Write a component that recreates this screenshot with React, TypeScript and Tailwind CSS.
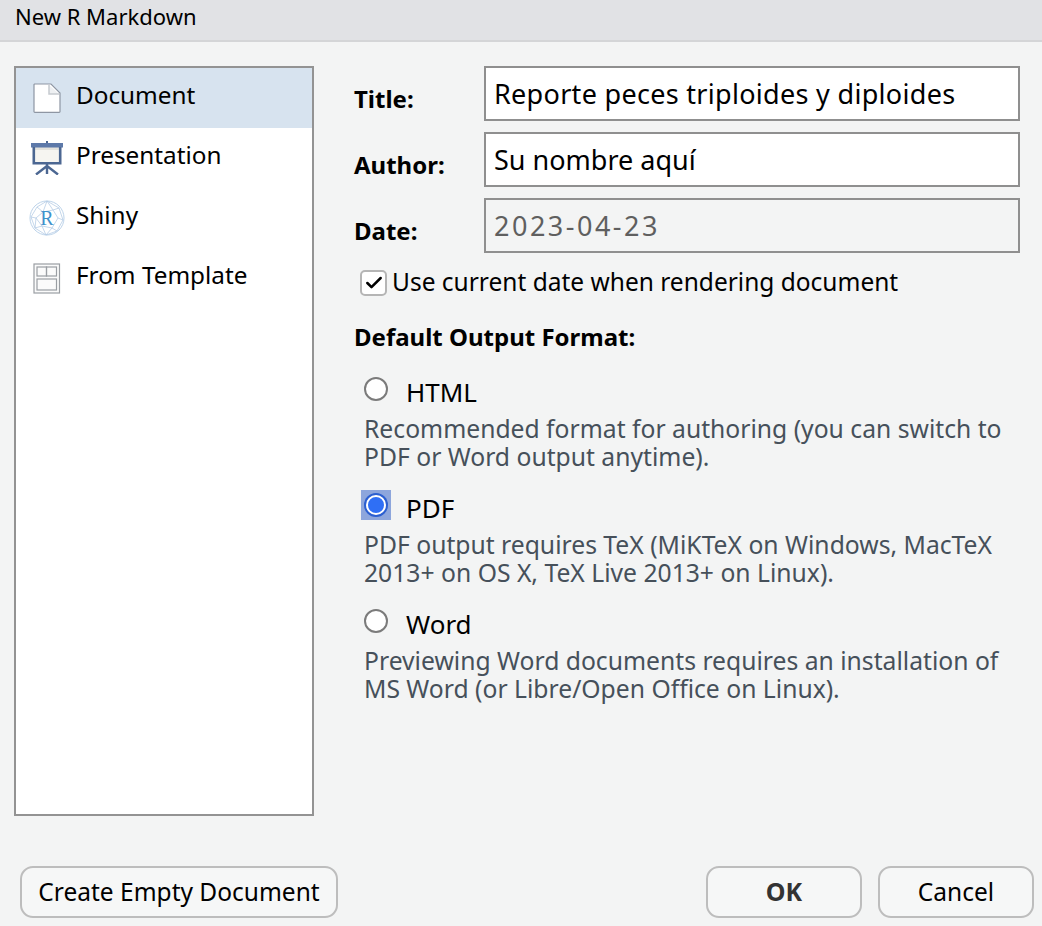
import { Check } from 'lucide-react';

const items = ['Document', 'Presentation', 'Shiny', 'From Template'];

function DocumentIcon() {
  return (
    <svg width="28" height="30" viewBox="0 0 28 30" fill="none">
      <path d="M1.5 1H18L27 10V28.5a.8.8 0 0 1-.8.8H1.8a.8.8 0 0 1-.8-.8V1.5z" fill="#fff" stroke="#8e96a3" strokeWidth="1.2" />
      <path d="M16 2V11H26" fill="#eef0f2" stroke="#c6cad0" strokeWidth="1.5" />
    </svg>
  );
}

function PresentationIcon() {
  return (
    <svg width="34" height="34" viewBox="0 0 34 34" fill="none">
      <rect x="16" y="0" width="2" height="3" fill="#4c6792" />
      <rect x="5" y="6" width="24" height="17" fill="#f6f5f1" />
      <rect x="5" y="6" width="24" height="3" fill="#e3e2dc" />
      <rect x="1" y="2" width="32" height="4.5" fill="#5d79a9" />
      <path d="M3.8 6V22.3H30.2V6" stroke="#4c6792" strokeWidth="2.6" />
      <path d="M17 23V33M17 25L6 33.5M17 25L28 33.5" stroke="#4c6792" strokeWidth="2.4" />
    </svg>
  );
}

function ShinyIcon() {
  return (
    <svg width="36" height="36" viewBox="0 0 36 36" fill="none">
      <circle cx="18" cy="18" r="17" fill="#fff" stroke="#bcd3ea" strokeWidth="1" />
      <path
        d="M18 1L8 7L2 17L6 28L17 35L28 31L34 20L30 8ZM8 7L14 12L18 1L24 10L30 8M14 12L24 10L29 18L34 20M14 12L7 18L2 17M7 18L6 28L13 26L7 18M13 26L17 35L23 28L28 31M23 28L29 18M13 26L23 28"
        stroke="#b6cde6"
        strokeWidth="0.8"
      />
      <text x="18" y="25" textAnchor="middle" fontFamily="'Liberation Serif', serif" fontSize="20" fill="#3f92cc">
        R
      </text>
    </svg>
  );
}

function TemplateIcon() {
  return (
    <svg width="28" height="31" viewBox="0 0 28 31" fill="none" stroke="#9a9ea3" strokeWidth="1.2">
      <rect x="1" y="1" width="25.5" height="29" fill="#fbfbfb" />
      <rect x="4" y="4" width="9.5" height="9" />
      <rect x="13.5" y="4" width="10" height="9" />
      <rect x="4" y="16" width="19.5" height="11" />
    </svg>
  );
}

const icons = [<DocumentIcon />, <PresentationIcon />, <ShinyIcon />, <TemplateIcon />];

function Field({ label, value, disabled, spacing }: { label: string; value: string; disabled?: boolean; spacing?: string }) {
  return (
    <div className="flex h-[55px] items-center">
      <span className="w-[130px] pt-[10px] text-[24px] font-bold text-black">{label}</span>
      <div
        className={`flex h-full w-[536px] items-center border-2 border-[#8f8f8f] pl-[8px] pt-[2px] text-[27px] ${spacing ?? ''} ${
          disabled ? 'bg-[#f3f4f4] text-[#5f5f5f]' : 'bg-white text-black'
        }`}
      >
        {value}
      </div>
    </div>
  );
}

function Format({ label, lines, checked }: { label: string; lines: string[]; checked?: boolean }) {
  return (
    <div className="h-[116px]">
      <div className="flex h-[34px] items-center">
        <div className="relative mb-[10px] ml-[10px] flex h-[24px] w-[24px] items-center justify-center">
          {checked ? (
            <>
              <div className="absolute -inset-[3px] bg-[#8da6dc]" />
              <div className="relative h-[20px] w-[20px] rounded-full border-2 border-white bg-[#2f6ff5] ring-2 ring-[#2b5fd0]" />
            </>
          ) : (
            <div className="h-[24px] w-[24px] rounded-full border-2 border-[#7b7b7b] bg-white" />
          )}
        </div>
        <span className="ml-[18px] pb-[4px] text-[26px] text-black">{label}</span>
      </div>
      <div className="mt-[4px] ml-[10px] text-[24.7px] leading-[28px] text-[#46505a]">
        {lines.map((line) => (
          <div key={line}>{line}</div>
        ))}
      </div>
    </div>
  );
}

export default function App() {
  return (
    <div className="flex h-[926px] flex-col overflow-hidden bg-[#f3f4f4] font-['Noto_Sans',sans-serif]">
      {/* タイトルバー */}
      <div className="flex h-[42px] items-center border-b-2 border-[#d4d5d7] bg-[#e1e2e5] pl-[15px] pb-[7px] text-[22px] text-black">
        New R Markdown
      </div>

      <div className="flex flex-1 pt-[24px] pl-[14px]">
        {/* 左リスト */}
        <div className="h-[750px] w-[300px] border-2 border-[#939393] bg-white">
          {items.map((item, i) => (
            <div key={item} className={`flex h-[60px] items-center ${i === 0 ? 'bg-[#d7e3ef]' : ''}`}>
              <div className="flex w-[60px] justify-center pl-[2px]">{icons[i]}</div>
              <span className="pb-[6px] text-[24.3px] text-black">{item}</span>
            </div>
          ))}
        </div>

        {/* フォーム */}
        <div className="ml-[40px] w-[666px]">
          <div className="flex flex-col gap-[11px]">
            <Field label="Title:" value="Reporte peces triploides y diploides" spacing="tracking-[0.3px]" />
            <Field label="Author:" value="Su nombre aquí" />
            <Field label="Date:" value="2023-04-23" disabled spacing="tracking-[2.5px]" />
          </div>

          <div className="mt-[17px] ml-[6px] flex h-[26px] items-center">
            <div className="flex h-[26px] w-[27px] items-center justify-center rounded-[5px] border-2 border-[#b5b5b5] bg-white">
              <Check size={20} strokeWidth={3} className="text-black" />
            </div>
            <span className="ml-[5px] pb-[1px] text-[24.5px] text-black">Use current date when rendering document</span>
          </div>

          <div className="mt-[23px] text-[24px] font-bold text-black">Default Output Format:</div>

          <div className="mt-[22px]">
            <Format label="HTML" lines={['Recommended format for authoring (you can switch to', 'PDF or Word output anytime).']} />
            <Format label="PDF" checked lines={['PDF output requires TeX (MiKTeX on Windows, MacTeX', '2013+ on OS X, TeX Live 2013+ on Linux).']} />
            <Format label="Word" lines={['Previewing Word documents requires an installation of', 'MS Word (or Libre/Open Office on Linux).']} />
          </div>
        </div>
      </div>

      {/* ボタン */}
      <div className="flex h-[60px] items-start pl-[20px] pr-[8px]">
        <button className="h-[52px] w-[318px] rounded-[13px] border-2 border-[#bdbdbd] bg-[#f6f7f7] text-[24.5px] text-black">
          Create Empty Document
        </button>
        <button className="ml-auto h-[52px] w-[156px] rounded-[13px] border-2 border-[#bdbdbd] bg-[#f6f7f7] text-[25px] font-bold text-[#333]">
          OK
        </button>
        <button className="ml-[16px] h-[52px] w-[156px] rounded-[13px] border-2 border-[#bdbdbd] bg-[#f6f7f7] text-[24.5px] text-black">
          Cancel
        </button>
      </div>
    </div>
  );
}
